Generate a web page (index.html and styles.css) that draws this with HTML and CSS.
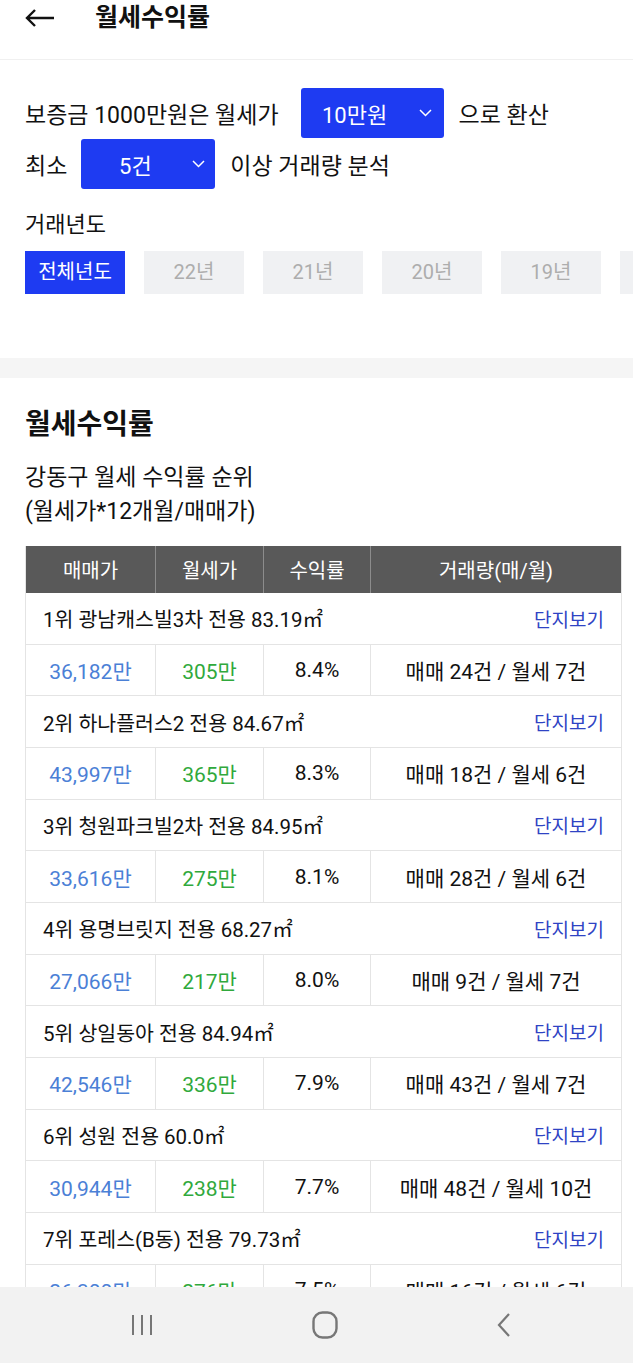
FILE: index.html
```html
<!DOCTYPE html>
<html lang="ko">
<head>
    <meta charset="UTF-8">
    <meta name="viewport" content="width=device-width, initial-scale=1.0">
    <title>월세수익률</title>

    <link rel="stylesheet" href="styles.css">
</head>

<body>
    <!-- Top bar with back button and page title -->
    <header class="topbar">
        <svg class="back-icon" width="30" height="18" viewBox="0 0 30 18">
            <path d="M2 9 H29 M10 1 L2 9 L10 17" fill="none" stroke="#111" stroke-width="2.4" stroke-linejoin="miter"/>
        </svg>
        <h1>월세수익률</h1>
    </header>

    <!-- Filter options -->
    <section class="filters">
        <div class="filter-line">
            <span>보증금 1000만원은 월세가</span>
            <div class="select select-wide">
                <span class="select-value">10만원</span>
                <svg class="chevron" width="13" height="8" viewBox="0 0 13 8"><path d="M1 1 L6.5 6.5 L12 1" fill="none" stroke="#fff" stroke-width="1.5"/></svg>
            </div>
            <span>으로 환산</span>
        </div>
        <div class="filter-line">
            <span>최소</span>
            <div class="select">
                <span class="select-value">5건</span>
                <svg class="chevron" width="13" height="8" viewBox="0 0 13 8"><path d="M1 1 L6.5 6.5 L12 1" fill="none" stroke="#fff" stroke-width="1.5"/></svg>
            </div>
            <span>이상 거래량 분석</span>
        </div>

        <div class="year-label">거래년도</div>
        <div class="year-tabs">
            <div class="year-tab active">전체년도</div>
            <div class="year-tab">22년</div>
            <div class="year-tab">21년</div>
            <div class="year-tab">20년</div>
            <div class="year-tab">19년</div>
            <div class="year-tab"></div>
        </div>
    </section>

    <div class="divider"></div>

    <!-- Ranking table -->
    <section class="ranking">
        <h2>월세수익률</h2>
        <p class="ranking-desc">강동구 월세 수익률 순위<br>(월세가*12개월/매매가)</p>

        <div class="rank-table">
            <div class="rank-head">
                <div>매매가</div>
                <div>월세가</div>
                <div>수익률</div>
                <div>거래량(매/월)</div>
            </div>

            <div class="rank-name"><span>1위 광남캐스빌3차 전용 83.19㎡</span><a href="#">단지보기</a></div>
            <div class="rank-values">
                <div class="price">36,182만</div><div class="rent">305만</div><div>8.4%</div><div>매매 24건 / 월세 7건</div>
            </div>

            <div class="rank-name"><span>2위 하나플러스2 전용 84.67㎡</span><a href="#">단지보기</a></div>
            <div class="rank-values">
                <div class="price">43,997만</div><div class="rent">365만</div><div>8.3%</div><div>매매 18건 / 월세 6건</div>
            </div>

            <div class="rank-name"><span>3위 청원파크빌2차 전용 84.95㎡</span><a href="#">단지보기</a></div>
            <div class="rank-values">
                <div class="price">33,616만</div><div class="rent">275만</div><div>8.1%</div><div>매매 28건 / 월세 6건</div>
            </div>

            <div class="rank-name"><span>4위 용명브릿지 전용 68.27㎡</span><a href="#">단지보기</a></div>
            <div class="rank-values">
                <div class="price">27,066만</div><div class="rent">217만</div><div>8.0%</div><div>매매 9건 / 월세 7건</div>
            </div>

            <div class="rank-name"><span>5위 상일동아 전용 84.94㎡</span><a href="#">단지보기</a></div>
            <div class="rank-values">
                <div class="price">42,546만</div><div class="rent">336만</div><div>7.9%</div><div>매매 43건 / 월세 7건</div>
            </div>

            <div class="rank-name"><span>6위 성원 전용 60.0㎡</span><a href="#">단지보기</a></div>
            <div class="rank-values">
                <div class="price">30,944만</div><div class="rent">238만</div><div>7.7%</div><div>매매 48건 / 월세 10건</div>
            </div>

            <div class="rank-name"><span>7위 포레스(B동) 전용 79.73㎡</span><a href="#">단지보기</a></div>
            <div class="rank-values">
                <div class="price">26,300만</div><div class="rent">276만</div><div>7.5%</div><div>매매 16건 / 월세 6건</div>
            </div>
        </div>
    </section>

    <!-- Android navigation bar -->
    <nav class="navbar">
        <svg width="24" height="24" viewBox="0 0 24 24"><path d="M3 2 V22 M12 2 V22 M21 2 V22" stroke="#777" stroke-width="2"/></svg>
        <svg width="26" height="28" viewBox="0 0 26 28"><rect x="1.5" y="1.5" width="23" height="25" rx="9" fill="none" stroke="#777" stroke-width="2.4"/></svg>
        <svg width="16" height="26" viewBox="0 0 16 26"><path d="M13 2 L3 13 L13 24" fill="none" stroke="#777" stroke-width="2.2"/></svg>
    </nav>
</body>

</html>
```

FILE: styles.css
```css
/* Base page */
body {
    margin: 0;
    width: 633px;
    background-color: #fff;
    color: #111;
    font-family: Roboto, "Noto Sans CJK KR", sans-serif;
}

/* Top bar */
.topbar {
    height: 59px;
    display: flex;
    align-items: flex-start;
    padding-left: 25px;
    border-bottom: 1px solid #f0f0f0;
}

.back-icon {
    margin-top: 9px;
}

.topbar h1 {
    margin: 0 0 0 40px;
    font-size: 25px;
    font-weight: 700;
    line-height: 36px;
}

/* Filter section */
.filters {
    padding: 28px 0 64px 25px;
    overflow: hidden;
}

.filter-line {
    display: flex;
    align-items: center;
    height: 50px;
    margin-bottom: 1px;
    font-size: 23px;
}

.select {
    display: flex;
    align-items: center;
    width: 134px;
    height: 50px;
    box-sizing: border-box;
    padding: 0 10px 0 10px;
    margin: 0 15px 0 14px;
    background-color: #1e3bf2;
    border-radius: 3px;
    color: #fff;
    font-size: 22px;
}

.select-wide {
    width: 143px;
    margin-left: 22px;
    padding-right: 12px;
}

.select-value {
    width: 88px;
    text-align: center;
}

.chevron {
    margin-left: auto;
}

.year-label {
    margin-top: 21px;
    font-size: 22px;
    line-height: 30px;
}

.year-tabs {
    display: flex;
    gap: 19px;
    margin-top: 11px;
}

.year-tab {
    flex: 0 0 100px;
    height: 43px;
    line-height: 43px;
    text-align: center;
    font-size: 20px;
    background-color: #f0f1f3;
    color: #adadad;
}

.year-tab.active {
    background-color: #1e3bf2;
    color: #fff;
}

/* Gray band between sections */
.divider {
    height: 20px;
    background-color: #f5f5f5;
}

/* Ranking section */
.ranking {
    padding: 27px 11px 0 25px;
}

.ranking h2 {
    margin: 0;
    font-size: 28px;
    font-weight: 700;
    line-height: 40px;
}

.ranking-desc {
    margin: 16px 0 17px;
    font-size: 23px;
    line-height: 34px;
}

.rank-table {
    border: 1px solid #e4e4e4;
    border-top: none;
}

.rank-head,
.rank-values {
    display: grid;
    grid-template-columns: 130px 108px 107px 1fr;
}

.rank-head {
    height: 47px;
    background-color: #595959;
    color: #fff;
    font-size: 20px;
}

.rank-head div {
    display: flex;
    align-items: center;
    justify-content: center;
    border-right: 1px solid #8c8c8c;
}

.rank-head div:last-child,
.rank-values div:last-child {
    border-right: none;
}

.rank-name {
    display: flex;
    align-items: center;
    justify-content: space-between;
    height: 50.67px;
    padding: 0 17px 0 17px;
    border-bottom: 1px solid #e4e4e4;
    font-size: 20.5px;
}

.rank-name a {
    color: #2f43c4;
    text-decoration: none;
    font-size: 19px;
}

.rank-values {
    height: 50.67px;
    border-bottom: 1px solid #e4e4e4;
    font-size: 21px;
}

.rank-values div {
    display: flex;
    align-items: center;
    justify-content: center;
    border-right: 1px solid #e4e4e4;
}

.rank-values .price {
    color: #4b80d6;
}

.rank-values .rent {
    color: #30a93c;
}

/* Bottom navigation bar, stays over the content */
.navbar {
    position: fixed;
    left: 0;
    bottom: 0;
    width: 633px;
    height: 76px;
    display: flex;
    align-items: center;
    gap: 158px;
    padding-left: 130px;
    box-sizing: border-box;
    background-color: #f2f2f2;
}
```
